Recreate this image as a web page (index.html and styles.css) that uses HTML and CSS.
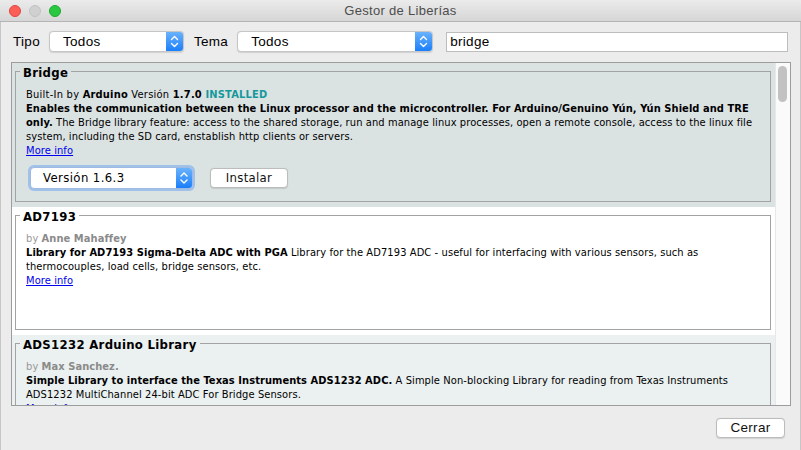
FILE: index.html
```html
<!DOCTYPE html>
<html lang="es">
<head>
<meta charset="utf-8">
<title>Gestor de Liberías</title>
<link rel="stylesheet" href="styles.css">
</head>
<body>
<div class="window">
  <div class="titlebar">
    <div class="lights">
      <span class="light red"></span>
      <span class="light grey"></span>
      <span class="light green"></span>
    </div>
    <div class="title">Gestor de Liberías</div>
  </div>

  <div class="toolbar">
    <span class="label">Tipo</span>
    <div class="select select-tipo">
      <span class="select-text">Todos</span>
      <span class="select-arrow"><svg width="17" height="21" viewBox="0 0 17 21"><path d="M5.5 8.5 L8.5 5.5 L11.5 8.5 M5.5 12.5 L8.5 15.5 L11.5 12.5" fill="none" stroke="#fff" stroke-width="1.4" stroke-linecap="round" stroke-linejoin="round"/></svg></span>
    </div>
    <span class="label label-tema">Tema</span>
    <div class="select select-tema">
      <span class="select-text">Todos</span>
      <span class="select-arrow"><svg width="17" height="21" viewBox="0 0 17 21"><path d="M5.5 8.5 L8.5 5.5 L11.5 8.5 M5.5 12.5 L8.5 15.5 L11.5 12.5" fill="none" stroke="#fff" stroke-width="1.4" stroke-linecap="round" stroke-linejoin="round"/></svg></span>
    </div>
    <div class="search">bridge</div>
  </div>

  <div class="pane">
    <div class="list">
      <div class="item item-selected">
        <fieldset class="lib">
          <legend class="lib-name">Bridge</legend>
          <div class="lib-body">
            <div class="line line-meta">Built-In by <b>Arduino</b> Versión <b>1.7.0</b> <b class="installed">INSTALLED</b></div>
            <div class="line"><b>Enables the communication between the Linux processor and the microcontroller. For Arduino/Genuino Yún, Yún Shield and TRE only.</b> The Bridge library feature: access to the shared storage, run and manage linux processes, open a remote console, access to the linux file system, including the SD card, enstablish http clients or servers.</div>
            <div class="line"><a href="#" class="more">More info</a></div>
            <div class="actions">
              <div class="select select-version">
                <span class="select-text">Versión 1.6.3</span>
                <span class="select-arrow"><svg width="16" height="22" viewBox="0 0 16 22"><path d="M5 9 L8 6 L11 9 M5 13 L8 16 L11 13" fill="none" stroke="#fff" stroke-width="1.4" stroke-linecap="round" stroke-linejoin="round"/></svg></span>
              </div>
              <button class="btn btn-install">Instalar</button>
            </div>
          </div>
        </fieldset>
      </div>

      <div class="item">
        <fieldset class="lib">
          <legend class="lib-name">AD7193</legend>
          <div class="lib-body">
            <div class="line author">by <b>Anne Mahaffey</b></div>
            <div class="line"><b>Library for AD7193 Sigma-Delta ADC with PGA</b> Library for the AD7193 ADC - useful for interfacing with various sensors, such as thermocouples, load cells, bridge sensors, etc.</div>
            <div class="line"><a href="#" class="more">More info</a></div>
          </div>
        </fieldset>
      </div>

      <div class="item item-alt">
        <fieldset class="lib">
          <legend class="lib-name">ADS1232 Arduino Library</legend>
          <div class="lib-body">
            <div class="line author">by <b>Max Sanchez.</b></div>
            <div class="line"><b>Simple Library to interface the Texas Instruments ADS1232 ADC.</b> A Simple Non-blocking Library for reading from Texas Instruments ADS1232 MultiChannel 24-bit ADC For Bridge Sensors.</div>
            <div class="line"><a href="#" class="more">More info</a></div>
          </div>
        </fieldset>
      </div>
    </div>
    <div class="scrollbar"><div class="thumb"></div></div>
  </div>

  <div class="footer">
    <button class="btn btn-close">Cerrar</button>
  </div>
</div>
</body>
</html>
```

FILE: styles.css
```css
* { box-sizing: border-box; }

html, body {
  margin: 0;
  padding: 0;
  background: #ececec;
}

.window {
  width: 801px;
  height: 450px;
  background: #ececec;
  overflow: hidden;
  font-family: "Liberation Sans", Arial, sans-serif;
  color: #000;
  box-shadow: inset 1px 0 0 #c6c6c6, inset -1px 0 0 #c6c6c6;
}

/* Title bar */
.titlebar {
  height: 22px;
  background: linear-gradient(#ebebeb, #d6d6d6);
  border-bottom: 1px solid #b4b4b4;
  display: flex;
  align-items: center;
  position: relative;
}
.lights {
  display: flex;
  gap: 8px;
  padding-left: 9px;
}
.light {
  width: 12px;
  height: 12px;
  border-radius: 50%;
  display: block;
}
.light.red { background: #fc5f57; border: 1px solid #e2463f; }
.light.grey { background: #d0d0d0; border: 1px solid #c2c2c2; }
.light.green { background: #2ac841; border: 1px solid #1aab2d; }
.title {
  position: absolute;
  left: 0;
  right: 0;
  text-align: center;
  font-size: 13px;
  color: #4d4d4d;
  letter-spacing: 0.3px;
}

/* Toolbar */
.toolbar {
  display: flex;
  align-items: flex-start;
  padding: 9px 0 0 13px;
  height: 30px;
}
.label {
  font-size: 13.5px;
  line-height: 21px;
  margin-right: 9px;
  letter-spacing: 0.3px;
}
.label-tema {
  margin-left: 10px;
}
.select {
  height: 21px;
  background: #fff;
  border: 1px solid #c6c6c6;
  border-radius: 4px;
  display: flex;
  align-items: stretch;
  overflow: hidden;
  box-shadow: 0 0.5px 1px rgba(0,0,0,0.12);
}
.select-text {
  flex: 1;
  font-size: 13.5px;
  line-height: 19px;
  padding-left: 13px;
  letter-spacing: 0.3px;
}
.select-arrow {
  width: 17px;
  background: linear-gradient(#6ab2fb, #1a7ffb);
  display: flex;
  align-items: center;
  justify-content: center;
}
.select-arrow svg { display: block; }
.select-tipo { width: 135px; }
.select-tema { width: 196px; }
.search {
  margin-left: 13px;
  margin-top: 1px;
  width: 342px;
  height: 20px;
  background: #fff;
  border: 1px solid #bdbdbd;
  font-size: 13.5px;
  line-height: 18px;
  padding-left: 3px;
  letter-spacing: 0.3px;
}

/* Scroll pane */
.pane {
  margin: 10px 0 0 11px;
  width: 780px;
  height: 344px;
  border: 1px solid #9c9c9c;
  display: flex;
  background: #fff;
}
.list {
  width: 763px;
  overflow: hidden;
  font-family: "DejaVu Sans Condensed", "DejaVu Sans", sans-serif;
  font-size: 11px;
}
.scrollbar {
  width: 15px;
  background: #fafafa;
  border-left: 1px solid #e8e8e8;
  padding: 3px 0 0 2px;
}
.thumb {
  width: 9px;
  height: 36px;
  border-radius: 5px;
  background: #c2c2c2;
}

.item {
  background: #fff;
  padding: 0 4px 5px 3px;
}
.item-selected { background: #dbe2e2; }
.item-alt { background: #ebf0f0; }

.lib {
  margin: 0;
  border: 1px solid #a3a3a3;
  padding: 8px 10px 12px 10px;
  min-height: 123px;
}
.lib-name {
  font-size: 13px;
  font-weight: bold;
  line-height: 15px;
  padding: 2px 3px 0;
  margin-left: -6px;
  letter-spacing: 0.3px;
}
.lib-body .line {
  line-height: 14px;
  letter-spacing: 0.1px;
}
.lib-body .line-meta { letter-spacing: 0.25px; }
.lib-body b { letter-spacing: 0.07px; }
.lib-body .line-meta b { letter-spacing: 0.2px; }
.installed { color: #14999c; }
.author { color: #999; }
.author b { color: #8a8a8a; }
.more {
  color: #0000ee;
  text-decoration: underline;
}

.actions {
  display: flex;
  align-items: center;
  margin-top: 9px;
  padding-left: 4px;
  gap: 17px;
}
.select-version {
  width: 163px;
  height: 22px;
  border-color: #9fb9e0;
  box-shadow: 0 0 0 2px rgba(110, 165, 240, 0.55);
}
.select-version .select-text {
  font-size: 13px;
  line-height: 20px;
  padding-left: 12px;
  letter-spacing: 0.4px;
}
.select-version .select-arrow { width: 16px; }

.btn {
  background: #fff;
  border: 1px solid #bcbcbc;
  border-radius: 4px;
  height: 20px;
  padding: 0;
  font-size: 13px;
  line-height: 18px;
  color: #111;
  box-shadow: 0 0.5px 1px rgba(0,0,0,0.12);
}
.btn-install {
  width: 78px;
  font-family: "DejaVu Sans Condensed", "DejaVu Sans", sans-serif;
  letter-spacing: 0.3px;
}

.footer {
  display: flex;
  justify-content: flex-end;
  padding: 12px 16px 0 0;
}
.btn-close {
  width: 69px;
  font-family: "Liberation Sans", Arial, sans-serif;
  font-size: 13.5px;
  letter-spacing: 0.3px;
}
```
